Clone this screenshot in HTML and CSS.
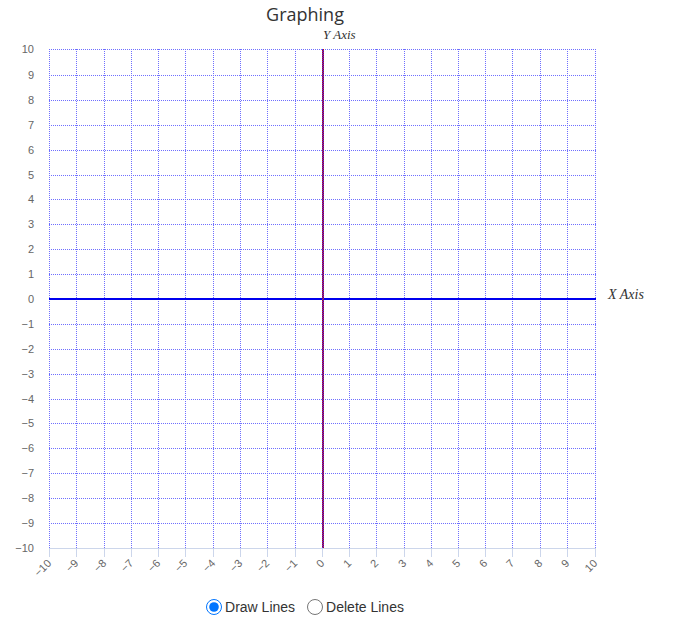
FILE: index.html
```html
<!DOCTYPE html>
<html>
<head>
<meta charset="utf-8">
<title>Graphing</title>
<link rel="stylesheet" href="styles.css">
</head>
<body>
<div class="page">
  <svg class="chart" width="610" height="597" viewBox="0 0 610 597" xmlns="http://www.w3.org/2000/svg">
    <text class="title" x="305" y="21">Graphing</text>
    <g class="grid" stroke="#6f6fff" stroke-width="1" stroke-dasharray="1 1" shape-rendering="crispEdges">
      <line x1="49.5" y1="49" x2="49.5" y2="548"/>
      <line x1="76.5" y1="49" x2="76.5" y2="548"/>
      <line x1="104.5" y1="49" x2="104.5" y2="548"/>
      <line x1="131.5" y1="49" x2="131.5" y2="548"/>
      <line x1="158.5" y1="49" x2="158.5" y2="548"/>
      <line x1="185.5" y1="49" x2="185.5" y2="548"/>
      <line x1="213.5" y1="49" x2="213.5" y2="548"/>
      <line x1="240.5" y1="49" x2="240.5" y2="548"/>
      <line x1="267.5" y1="49" x2="267.5" y2="548"/>
      <line x1="295.5" y1="49" x2="295.5" y2="548"/>
      <line x1="349.5" y1="49" x2="349.5" y2="548"/>
      <line x1="376.5" y1="49" x2="376.5" y2="548"/>
      <line x1="404.5" y1="49" x2="404.5" y2="548"/>
      <line x1="431.5" y1="49" x2="431.5" y2="548"/>
      <line x1="458.5" y1="49" x2="458.5" y2="548"/>
      <line x1="485.5" y1="49" x2="485.5" y2="548"/>
      <line x1="512.5" y1="49" x2="512.5" y2="548"/>
      <line x1="540.5" y1="49" x2="540.5" y2="548"/>
      <line x1="567.5" y1="49" x2="567.5" y2="548"/>
      <line x1="595.5" y1="49" x2="595.5" y2="548"/>

      <line x1="49" y1="49.5" x2="596" y2="49.5"/>
      <line x1="49" y1="75.5" x2="596" y2="75.5"/>
      <line x1="49" y1="100.5" x2="596" y2="100.5"/>
      <line x1="49" y1="125.5" x2="596" y2="125.5"/>
      <line x1="49" y1="150.5" x2="596" y2="150.5"/>
      <line x1="49" y1="175.5" x2="596" y2="175.5"/>
      <line x1="49" y1="199.5" x2="596" y2="199.5"/>
      <line x1="49" y1="224.5" x2="596" y2="224.5"/>
      <line x1="49" y1="249.5" x2="596" y2="249.5"/>
      <line x1="49" y1="274.5" x2="596" y2="274.5"/>
      <line x1="49" y1="324.5" x2="596" y2="324.5"/>
      <line x1="49" y1="349.5" x2="596" y2="349.5"/>
      <line x1="49" y1="374.5" x2="596" y2="374.5"/>
      <line x1="49" y1="399.5" x2="596" y2="399.5"/>
      <line x1="49" y1="423.5" x2="596" y2="423.5"/>
      <line x1="49" y1="448.5" x2="596" y2="448.5"/>
      <line x1="49" y1="473.5" x2="596" y2="473.5"/>
      <line x1="49" y1="498.5" x2="596" y2="498.5"/>
      <line x1="49" y1="523.5" x2="596" y2="523.5"/>
    </g>

    <g class="ticks" stroke="#ccd6eb" stroke-width="1" shape-rendering="crispEdges">
      <line x1="49" y1="548.5" x2="596" y2="548.5"/>
      <line x1="49.5" y1="548" x2="49.5" y2="557"/>
      <line x1="76.5" y1="548" x2="76.5" y2="557"/>
      <line x1="104.5" y1="548" x2="104.5" y2="557"/>
      <line x1="131.5" y1="548" x2="131.5" y2="557"/>
      <line x1="158.5" y1="548" x2="158.5" y2="557"/>
      <line x1="185.5" y1="548" x2="185.5" y2="557"/>
      <line x1="213.5" y1="548" x2="213.5" y2="557"/>
      <line x1="240.5" y1="548" x2="240.5" y2="557"/>
      <line x1="267.5" y1="548" x2="267.5" y2="557"/>
      <line x1="295.5" y1="548" x2="295.5" y2="557"/>
      <line x1="322.5" y1="548" x2="322.5" y2="557"/>
      <line x1="349.5" y1="548" x2="349.5" y2="557"/>
      <line x1="376.5" y1="548" x2="376.5" y2="557"/>
      <line x1="404.5" y1="548" x2="404.5" y2="557"/>
      <line x1="431.5" y1="548" x2="431.5" y2="557"/>
      <line x1="458.5" y1="548" x2="458.5" y2="557"/>
      <line x1="485.5" y1="548" x2="485.5" y2="557"/>
      <line x1="512.5" y1="548" x2="512.5" y2="557"/>
      <line x1="540.5" y1="548" x2="540.5" y2="557"/>
      <line x1="567.5" y1="548" x2="567.5" y2="557"/>
      <line x1="595.5" y1="548" x2="595.5" y2="557"/>
    </g>

    <line class="x-line" x1="49" y1="299" x2="596" y2="299" stroke="#0000ee" stroke-width="2" shape-rendering="crispEdges"/>
    <line class="y-line" x1="323" y1="49" x2="323" y2="548" stroke="#d40000" stroke-width="2" shape-rendering="crispEdges"/>
    <g class="grid-over" stroke="#3030ff" stroke-width="1" shape-rendering="crispEdges">
      <line x1="322.5" y1="49" x2="322.5" y2="548" stroke-dasharray="1 1"/>
      <line x1="323.5" y1="50" x2="323.5" y2="548" stroke-dasharray="1 1"/>
    </g>

    <g class="ylabels">
      <text x="34" y="53">10</text>
      <text x="34" y="79">9</text>
      <text x="34" y="104">8</text>
      <text x="34" y="129">7</text>
      <text x="34" y="154">6</text>
      <text x="34" y="179">5</text>
      <text x="34" y="203">4</text>
      <text x="34" y="228">3</text>
      <text x="34" y="253">2</text>
      <text x="34" y="278">1</text>
      <text x="34" y="303">0</text>
      <text x="34" y="328">−1</text>
      <text x="34" y="353">−2</text>
      <text x="34" y="378">−3</text>
      <text x="34" y="403">−4</text>
      <text x="34" y="427">−5</text>
      <text x="34" y="452">−6</text>
      <text x="34" y="477">−7</text>
      <text x="34" y="502">−8</text>
      <text x="34" y="527">−9</text>
      <text x="34" y="552">−10</text>
    </g>

    <g class="xlabels">
      <text x="52" y="564" transform="rotate(-45 52 564)">−10</text>
      <text x="79" y="564" transform="rotate(-45 79 564)">−9</text>
      <text x="107" y="564" transform="rotate(-45 107 564)">−8</text>
      <text x="134" y="564" transform="rotate(-45 134 564)">−7</text>
      <text x="161" y="564" transform="rotate(-45 161 564)">−6</text>
      <text x="188" y="564" transform="rotate(-45 188 564)">−5</text>
      <text x="216" y="564" transform="rotate(-45 216 564)">−4</text>
      <text x="243" y="564" transform="rotate(-45 243 564)">−3</text>
      <text x="270" y="564" transform="rotate(-45 270 564)">−2</text>
      <text x="298" y="564" transform="rotate(-45 298 564)">−1</text>
      <text x="325" y="564" transform="rotate(-45 325 564)">0</text>
      <text x="352" y="564" transform="rotate(-45 352 564)">1</text>
      <text x="379" y="564" transform="rotate(-45 379 564)">2</text>
      <text x="407" y="564" transform="rotate(-45 407 564)">3</text>
      <text x="434" y="564" transform="rotate(-45 434 564)">4</text>
      <text x="461" y="564" transform="rotate(-45 461 564)">5</text>
      <text x="488" y="564" transform="rotate(-45 488 564)">6</text>
      <text x="515" y="564" transform="rotate(-45 515 564)">7</text>
      <text x="543" y="564" transform="rotate(-45 543 564)">8</text>
      <text x="570" y="564" transform="rotate(-45 570 564)">9</text>
      <text x="598" y="564" transform="rotate(-45 598 564)">10</text>
    </g>

    <text class="axis-name y-name" x="323" y="39">Y Axis</text>
    <text class="axis-name x-name" x="608" y="299">X Axis</text>
  </svg>

  <div class="controls">
    <label class="option"><input type="radio" name="mode" checked>Draw Lines</label>
    <label class="option"><input type="radio" name="mode">Delete Lines</label>
  </div>
</div>
</body>
</html>
```

FILE: styles.css
```css
html, body {
  margin: 0;
  padding: 0;
  background: #ffffff;
}

.page {
  width: 610px;
  display: flex;
  flex-direction: column;
}

.chart {
  display: block;
  overflow: visible;
}

.title {
  font-family: "Open Sans", "Liberation Sans", sans-serif;
  font-size: 18px;
  fill: #333333;
  text-anchor: middle;
}

.ylabels text,
.xlabels text {
  font-family: "Liberation Sans", Arial, sans-serif;
  font-size: 11px;
  fill: #666666;
  text-anchor: end;
}

.axis-name {
  font-family: "Liberation Serif", "Times New Roman", serif;
  font-style: italic;
  fill: #333333;
}

.y-name {
  font-size: 13px;
}

.x-name {
  font-size: 14px;
}

.controls {
  height: 20px;
  display: flex;
  justify-content: center;
  align-items: center;
  gap: 12px;
}

.option {
  display: inline-flex;
  align-items: center;
  font-family: "Liberation Sans", Arial, sans-serif;
  font-size: 14px;
  color: #333333;
}

.option input {
  width: 16px;
  height: 16px;
  margin: 0 3px 0 0;
}
```
